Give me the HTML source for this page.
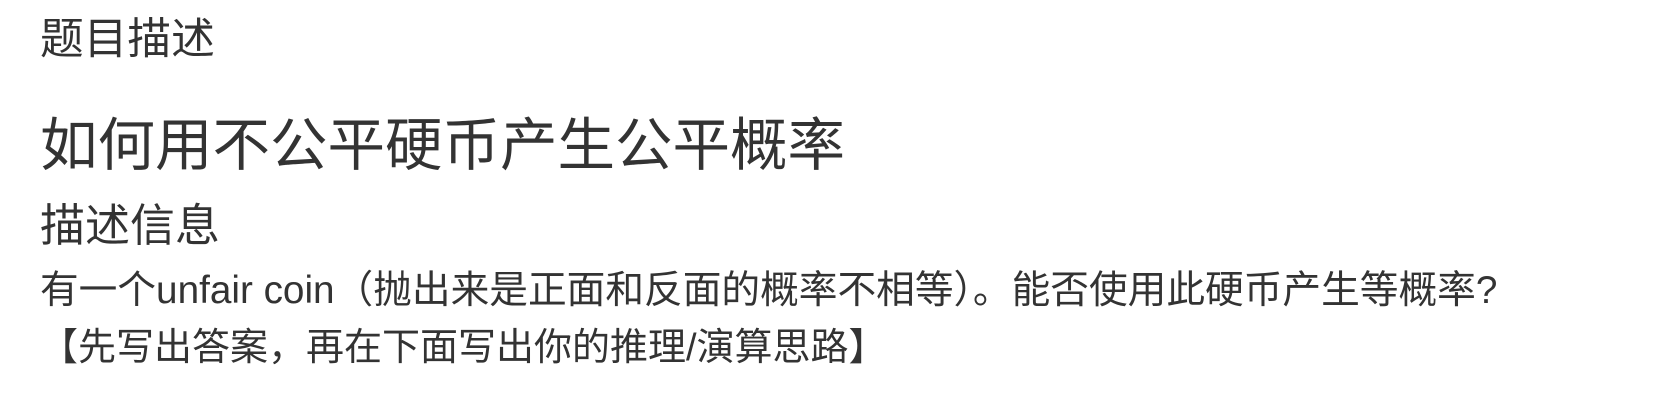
<!DOCTYPE html>
<html><head><meta charset="utf-8"><style>
html,body{margin:0;padding:0;background:#fff;width:1654px;height:414px;overflow:hidden}
div{position:absolute;left:40px;white-space:nowrap;color:#333;font-family:"Liberation Sans","Noto Sans CJK SC",sans-serif}
</style></head><body>
<div style="top:18px;font-size:43.7px;line-height:44px">题目描述</div>
<div style="top:117px;font-size:57.5px;line-height:58px">如何用不公平硬币产生公平概率</div>
<div style="top:203px;font-size:45px;line-height:45px">描述信息</div>
<div style="top:271px;font-size:38.7px;line-height:39px">有一个unfair coin（抛出来是正面和反面的概率不相等）。能否使用此硬币产生等概率?</div>
<div style="top:329px;font-size:38px;line-height:38px">【先写出答案，再在下面写出你的推理/演算思路】</div>
</body></html>
